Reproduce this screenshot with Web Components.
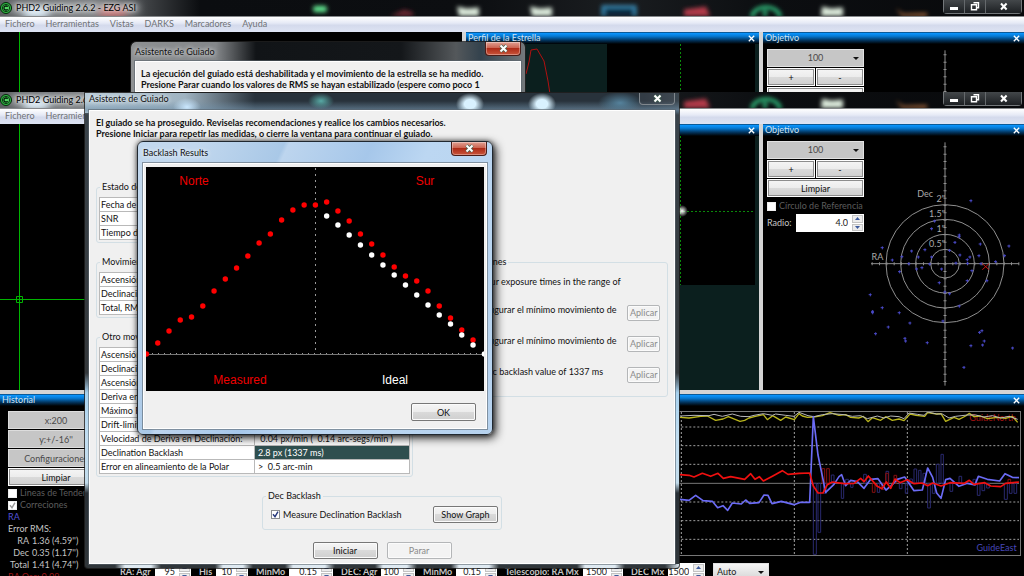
<!DOCTYPE html>
<html lang="es">
<head>
<meta charset="utf-8">
<title>PHD2 Guiding</title>
<style>
  html, body { height: 100%; margin: 0; }
  body {
    overflow: hidden;
    background: #000;
    font: 9px/12px Lato, "Open Sans", sans-serif;
    color: #111;
  }
</style>
</head>
<body>
<guide-desktop></guide-desktop>

<script>
const base = `
  * { box-sizing: border-box; }
  :host { display: block; box-sizing: border-box; }
  :host([hidden]) { display: none; }
  svg { display: block; }
  button, input, select { font: inherit; margin: 0; }
`;

const define = (name, html, setup) => {
  const template = document.createElement("template");
  template.innerHTML = html;
  customElements.define(name, class extends HTMLElement {
    constructor() {
      super();
      this.attachShadow({ mode: "open" }).append(template.content.cloneNode(true));
    }
    connectedCallback() {
      if (setup) setup(this.shadowRoot, this);
    }
  });
};

/* glass title bar with the desktop icons shining through */
define("glass-backdrop", `
  <style>${base}
    :host { background: linear-gradient(90deg, #5d6063 0, #74777a 90px, #45484b 140px, #0b0d10 200px, #0c0e11 46%, #1a1d20 60%, #0c0e11 75%, #08090b); overflow: hidden; }
    svg { width: 100%; height: 100%; }
  </style>
  <svg viewBox="0 0 1024 17" preserveAspectRatio="none" aria-hidden="true">
    <defs>
      <filter id="b" x="-30%" y="-60%" width="160%" height="220%"><feGaussianBlur stdDeviation="2"/></filter>
      <filter id="g" x="-30%" y="-60%" width="160%" height="220%"><feGaussianBlur stdDeviation="4"/></filter>
    </defs>
    <g filter="url(#g)">
      <rect x="12" y="3" width="126" height="11" fill="#b0b3b5"/>
      <rect x="24" y="9" width="24" height="10" fill="#e4f4ff"/>
      <rect x="100" y="9" width="26" height="9" fill="#d47a7c"/>
    </g>
    <g filter="url(#b)">
      <rect x="313" y="6" width="14" height="7" rx="3" fill="#5fe08c"/>
      <path d="M390 17l14-7 9 3v4z" fill="#6b2730"/>
      <path d="M457 7l10 2 12-1v9h-20zM530 7l10 2 12-1v9h-20z" fill="#dceadb"/>
      <path d="M603 17V7h32v10" fill="#102a40" stroke="#3b8db8" stroke-width="3"/>
      <path d="M684 10l22-3 4 10h-26z" fill="#b23a49"/>
      <path d="M752 18c2-14 26-14 28 0M765 17v-6" fill="none" stroke="#2fb578" stroke-width="4"/>
      <path d="M822 7l9 2 12-1v9h-22z" fill="#dceadb"/>
      <path d="M896 9l7 6 24-1v3h-25z" fill="#bd7440"/>
    </g>
  </svg>
`);

define("main-window", `
  <style>${base}
    :host { display: flex; flex-direction: column; overflow: hidden; isolation: isolate; background: #000; }
    header { display: grid; height: 17px; flex: none; border-bottom: 1px solid #85888b; }
    header > * { grid-area: 1 / 1; min-height: 0; }
    .front { display: flex; align-items: center; gap: 4px; color: #000; z-index: 1; }
    .front > svg { width: 12px; height: 12px; }
    h1 { margin: 0; font: inherit; flex: 1; text-shadow: 0 0 5px #fffa, 0 0 3px #fff8; }
    .caption { display: flex; align-self: flex-start; height: 14px; margin-right: 2px; border: 1px solid #73777a; border-top: 0; border-radius: 0 0 4px 4px; }
    .caption button { display: grid; place-items: center; width: 21px; padding: 0; border: 0; border-right: 1px solid #65696c; background: linear-gradient(#43474a, #1d2023); }
    .caption button:last-child { width: 35px; border-right: 0; }
    nav { display: flex; gap: 11px; flex: none; height: 15px; padding: 0 5px; line-height: 14px; background: linear-gradient(#fff, #e6eaf6 40%, #d4daec 55%, #dde3f3); }
    nav a { color: #6f7276; text-decoration: none; }
    main { flex: 1; min-height: 0; display: grid; gap: 4px; background: #d4d4d4; grid-template: 1fr 182px / 462fr 293fr 261fr; }
    :host([behind]) main { grid-template-rows: 266px; }
  </style>
  <header>
    <glass-backdrop></glass-backdrop>
    <div class="front">
      <svg viewBox="0 0 12 12" aria-hidden="true"><circle cx="6" cy="6" r="5.5" fill="#2fbb45" stroke="#04250a"/><circle cx="6" cy="6" r="3.6" fill="#54d865" stroke="#0b3511"/><path d="M7.6 4.9a2 2 0 1 0 0 2.2" fill="none" stroke="#03200a" stroke-width="1.3"/></svg>
      <h1>PHD2 Guiding 2.6.2 - EZG ASI</h1>
      <div class="caption">
        <button aria-label="Minimizar"><svg width="10" height="9"><path d="M1 5h8v3H1z" fill="#fff"/></svg></button>
        <button aria-label="Restaurar"><svg width="10" height="9"><path d="M3.5.8h5v5h-2M1.5 2.8h5v5h-5z" fill="none" stroke="#fff" stroke-width="1.4"/></svg></button>
        <button aria-label="Cerrar"><svg width="10" height="9"><path d="M2 1.5l5.6 6M7.6 1.5L2 7.5" stroke="#fff" stroke-width="2"/></svg></button>
      </div>
    </div>
  </header>
  <nav>
    <a href="#fichero">Fichero</a><a href="#herramientas">Herramientas</a><a href="#vistas">Vistas</a>
    <a href="#darks">DARKS</a><a href="#marcadores">Marcadores</a><a href="#ayuda">Ayuda</a>
  </nav>
  <main><slot></slot></main>
`, (root, host) => {
  // menus past the covering dialog are not drawn
  if (host.hasAttribute("short")) {
    root.querySelectorAll("nav a:nth-child(n+3)").forEach(el => el.remove());
    root.querySelector("h1").textContent = "PHD2 Guiding 2.6";
  }
});

define("dock-pane", `
  <style>${base}
    :host { display: flex; flex-direction: column; min-width: 0; min-height: 0; overflow: hidden; background: #000; }
    header { flex: none; display: flex; justify-content: space-between; align-items: center; height: 12px; padding: 0 4px 0 2px; color: #cfe3f5; background: linear-gradient(#0a3c66, #0a93fb 12%, #0679d2 35%, #02335c 70%, #000); }
    h2 { margin: 0; font: inherit; }
    button { padding: 0; border: 0; background: none; }
    .body { flex: 1; min-height: 0; display: flex; }
    ::slotted(*) { flex: 1; min-width: 0; }
  </style>
  <header><h2></h2><button aria-label="Cerrar panel"><svg width="7" height="7"><path d="M.8.8l5.4 5.4M6.2.8L.8 6.2" stroke="#fff" stroke-width="1.3"/></svg></button></header>
  <div class="body"><slot></slot></div>
`, (root, host) => {
  root.querySelector("h2").textContent = host.getAttribute("caption");
});

define("camera-view", `
  <style>${base}
    :host { background: #000; overflow: hidden; }
    svg { width: 100%; height: 100%; }
  </style>
  <svg viewBox="0 0 462 266" preserveAspectRatio="xMinYMin slice" aria-hidden="true" stroke="#00b400" fill="none">
    <path d="M19.5 0v266"/>
    <path d="M0 175.5h462M16.5 172.5h6v6h-6z"/>
  </svg>
`);

define("star-profile", `
  <style>${base}
    :host { background: #0b1f1e; overflow: hidden; }
    svg { width: 100%; height: 100%; }
  </style>
  <svg viewBox="0 0 293 254" preserveAspectRatio="xMaxYMin slice" aria-hidden="true" fill="none">
    <defs><radialGradient id="s"><stop stop-color="#fff"/><stop offset="1" stop-color="#fff0"/></radialGradient></defs>
    <path d="M141 0h148v149H141z" fill="#000"/>
    <path d="M214.500 0v149M141 75.500h148" stroke="#0a8a0a" stroke-dasharray="2 2"/>
    <circle cx="216" cy="75" r="6" fill="url(#s)"/>
    <path d="M60 30L63 18 65 6l6-1 7 12 4 20 4 26" stroke="#b01010"/>
  </svg>
`);

define("drop-list", `
  <style>${base}
    :host { display: grid; height: 18px; }
    select, svg { grid-area: 1 / 1; }
    select { appearance: none; width: 100%; height: 100%; padding: 0; border: 1px solid #e2e2e2; border-radius: 0; background: #c6c6c6; color: #4a4a4a; text-align: center; text-align-last: center; }
    :host([light]) select { padding-left: 3px; background: linear-gradient(#f6f6f6, #d4d4d4); color: #222; text-align-last: left; }
    svg { place-self: center end; margin-right: 5px; z-index: 1; pointer-events: none; }
  </style>
  <select><option></option></select>
  <svg width="6" height="3"><path d="M0 0h6L3 3z" fill="#111"/></svg>
`, (root, host) => {
  root.querySelector("option").textContent = host.getAttribute("value");
  root.querySelector("select").ariaLabel = host.getAttribute("label");
});

define("push-button", `
  <style>${base}
    :host { height: 18px; }
    button { display: block; width: 100%; height: 100%; padding: 0 2px; border: 1px solid #777; border-radius: 2px; background: linear-gradient(#f5f5f5, #ececec 48%, #dadada 50%, #cfcfcf); box-shadow: inset 0 0 0 1px #fbfbfb; color: #111; line-height: 1; white-space: nowrap; }
    button:disabled { border-color: #b4b6b8; background: #f3f3f3; color: #8b8b8b; }
    :host([dock]) button { border-color: #fff; outline: 1px solid #8d8d8d; outline-offset: -2px; border-radius: 0; }
    :host([flat]) button { border-color: #ddd; border-radius: 0; background: #c6c6c6; color: #4a4a4a; box-shadow: none; }
  </style>
  <button><slot></slot></button>
`, (root, host) => {
  root.querySelector("button").disabled = host.hasAttribute("disabled");
});

define("check-item", `
  <style>${base}
    label { display: flex; align-items: center; gap: 3px; white-space: nowrap; }
    input { appearance: none; flex: none; width: 9px; height: 9px; border: 1px solid #8a8d90; background: #fff; }
    span { display: grid; align-items: center; }
    span > * { grid-area: 1 / 1; }
    svg { display: none; z-index: 1; pointer-events: none; }
    input:checked + svg { display: block; }
    :host([dim]) { color: #5c5c5c; }
    :host([dim]) path { stroke: #999; }
    :host([dim]) input { border-color: #eee; }
  </style>
  <label><span><input type="checkbox"><svg width="9" height="9"><path d="M2 4.300l2 2.400 3-5" fill="none" stroke="#25387c" stroke-width="1.400"/></svg></span><slot></slot></label>
`, (root, host) => {
  const box = root.querySelector("input");
  box.checked = host.hasAttribute("checked");
  box.disabled = host.hasAttribute("dim");
});

define("spin-box", `
  <style>${base}
    :host { display: flex; align-items: center; gap: 4px; height: 18px; white-space: nowrap; }
    label { color: #c4c4c4; }
    .field { flex: 1; min-width: 0; display: flex; height: 100%; background: #fff; font-weight: normal; }
    input { appearance: textfield; flex: 1; min-width: 0; width: 0; padding: 0 3px 0 0; border: 0; background: none; color: #222; text-align: right; }
    input::-webkit-inner-spin-button { display: none; }
    .arrows { display: flex; flex-direction: column; gap: 1px; width: 13px; padding: 1px; }
    .arrows button { flex: 1; display: grid; place-items: center; padding: 0; border: 1px solid #c3c3c3; background: #ececec; }
  </style>
  <label for="n"></label>
  <div class="field">
    <input id="n" type="number" step="any">
    <div class="arrows">
      <button aria-label="Subir"><svg width="5" height="3"><path d="M0 3h5L2.500 0z" fill="#3d5a9c"/></svg></button>
      <button aria-label="Bajar"><svg width="5" height="3"><path d="M0 0h5L2.500 3z" fill="#3d5a9c"/></svg></button>
    </div>
  </div>
`, (root, host) => {
  root.querySelector("label").textContent = host.getAttribute("label");
  root.querySelector("input").value = host.getAttribute("value");
});

/* coordinates are in thirds of a pixel, origin at the centre of the target */
define("target-plot", `
  <style>${base}
    svg { width: 100%; height: 246px; overflow: visible; }
    text { font-size: 27px; fill: #aaa; text-anchor: end; }
  </style>
  <svg viewBox="-216 -368 432 738" preserveAspectRatio="xMidYMin meet" fill="none">
    <g stroke="#8f8f8f" stroke-width="3">
      <circle r="43"/><circle r="88"/><circle r="133"/><circle r="177"/>
      <path d="M0-364V366M-222 0H222"/>
      <path d="M0-352V360" stroke-width="9" stroke-dasharray="3 19"/>
      <path d="M-220 0H224" stroke-width="9" stroke-dasharray="3 19"/>
    </g>
    <g class="dots" stroke="#4a4ac8" stroke-width="3"></g>
    <path d="M112 0l20 18M132 0l-20 18" stroke="#c01010" stroke-width="3"/>
    <text x="-36" y="-200">Dec</text>
    <text x="0" y="-185">2"</text>
    <text x="0" y="-140">1.5"</text>
    <text x="0" y="-94">1"</text>
    <text x="0" y="-50">0.5"</text>
    <text x="-185" y="-10">RA</text>
  </svg>
`, root => {
  const dots = [[862,241],[753,302],[744,325],[827,344],[827,349],[814,366],[890,371],[976,377],[596,382],[684,392],[724,388],[798,390],[655,409],[704,410],[744,410],[829,404],[859,410],[851,418],[886,406],[963,406],[626,419],[676,430],[738,431],[817,428],[852,429],[892,430],[936,424],[715,442],[699,446],[774,446],[648,454],[865,451],[767,487],[851,481],[910,481],[784,515],[798,520],[560,523],[596,562],[827,557],[567,573],[567,577],[647,577],[778,602],[679,608],[614,620],[576,640],[664,654],[666,662],[731,667],[895,631],[888,636],[902,662],[897,674],[862,676],[987,683],[841,741]];
  root.querySelector(".dots").innerHTML =
    `<path d="${dots.map(([x, y]) => `M${x - 789} ${y - 430}h9m-4-4v9`).join("")}"/>`;
});

define("target-controls", `
  <style>${base}
    :host { display: flex; gap: 4px; padding: 5px 2px 0 4px; }
    .tools { flex: none; display: flex; flex-direction: column; gap: 1px; width: 97px; }
    .zoom { display: flex; gap: 1px; }
    .zoom > * { flex: 1; }
    check-item { margin: 2px 0 1px; }
    target-plot { flex: 1; min-width: 0; }
  </style>
  <div class="tools">
    <drop-list value="100" label="Escala"></drop-list>
    <div class="zoom"><push-button dock>+</push-button><push-button dock>-</push-button></div>
    <push-button dock><span class="more">Limpiar</span></push-button>
    <check-item dim class="more">Círculo de Referencia</check-item>
    <spin-box label="Radio:" value="4.0" class="more"></spin-box>
  </div>
  <target-plot class="plot"></target-plot>
`, (root, host) => {
  // only the tip of the axis shows when the window is covered
  if (host.hasAttribute("behind")) {
    root.querySelectorAll(".more").forEach(el => el.remove());
    root.querySelector(".plot").shadowRoot.querySelectorAll("text").forEach(el => el.remove());
  }
});

/* guiding curves, also in thirds of a pixel and pinned to the right edge */
define("history-graph", `
  <style>${base}
    :host { overflow: hidden; border: 1px solid #777; border-width: 1px 1px 1px 0; }
    svg { width: 100%; height: 100%; overflow: visible; }
    text { font-size: 27px; text-anchor: end; }
  </style>
  <svg viewBox="-12 66 1020 429" preserveAspectRatio="xMaxYMin meet" fill="none" stroke-linejoin="round">
    <path d="M-1700 111H1005M-1700 167H1005M-1700 223H1005M-1700 336H1005M-1700 392H1005M-1700 448H1005M331 66V495M670 66V495M-8 66V495" stroke="#a0a0a0" stroke-width="3" stroke-dasharray="6 6"/>
    <path d="M-1700 280H1005" stroke="#777" stroke-width="3"/>
    <path d="M388 280h9V493h-9zM402 280h8V427h-8zM419 280h8v30h-8zM442 255h8v25h-8zM472 280h7v45h-7zM485 268h8v12h-8zM500 280h7v12h-7zM539 253h8v27h-8zM580 280h7v27h-7zM606 244h8v36h-8zM646 280h8v16h-8zM664 280h7v30h-7zM677 267h8v13h-8zM690 237h8v43h-8zM704 241h7v39h-7zM717 250h8v30h-8zM731 280h8v74h-8zM745 280h8v30h-8zM757 223h8v57h-8zM771 193h7v87h-7zM798 280h8v24h-8zM825 259h8v21h-8zM867 268h8v12h-8zM880 280h8v36h-8zM894 280h8v22h-8zM908 280h8v14h-8zM961 280h9v48h-9zM976 280h8v30h-8zM990 280h8v30h-8z" stroke="#29296e" stroke-width="3"/>
    <path d="M414 236h8v44h-8zM428 236h8v44h-8zM565 280h8v27h-8zM593 280h8v18h-8zM605 250h8v30h-8zM630 256h8v24h-8zM972 268h8v12h-8z" stroke="#861010" stroke-width="3"/>
    <text x="996" y="93" fill="#a51212">GuideNorth</text>
    <path d="M-12 82L15 84 50 79 70 78 95 91 117 87 133 80 168 94 182 91 195 84 211 80 238 74 250 89 266 77 290 91 305 81 331 89 345 71 355 78 370 82 388 81 415 77 438 68 465 76 485 74 500 82 524 84 538 79 552 95 565 83 590 91 605 80 625 91 645 87 660 92 678 72 696 76 722 79 731 68 758 72 771 71 785 94 810 82 825 88 845 78 856 70 870 80 889 78 910 86 940 82 965 85 985 79 1001 97" stroke="#b9b51c" stroke-width="4"/>
    <path d="M-12 78L30 76 75 77 90 73 115 79 145 72 170 79 195 80 210 76 238 71 265 76 275 72 305 76 330 79 345 67 372 77 390 80 415 74 445 71 480 74 505 79 530 77 550 86 580 78 600 84 620 78 645 80 660 86 675 69 700 73 720 76 731 66 758 72 775 72 795 84 815 79 850 75 875 75 900 81 925 77 950 84 975 79 1001 88" stroke="#b9b9b9" stroke-width="3"/>
    <path d="M-12 328L15 331 35 316 57 332 85 334 101 353 117 347 131 361 145 339 172 342 185 330 197 340 225 338 240 315 252 316 264 341 292 334 330 344 350 337 377 337 388 80 402 195 425 307 450 283 465 260 473 254 485 287 500 271 520 275 540 295 560 268 582 266 606 300 622 287 640 268 662 261 690 302 715 300 731 234 746 262 758 309 771 325 785 269 798 265 825 289 850 280 873 285 883 259 910 268 947 273 963 251 985 262 1005 263" stroke="#6b6bf5" stroke-width="5"/>
    <path d="M-12 254L15 256 30 261 55 250 80 259 102 250 118 265 140 260 182 268 200 251 213 268 226 260 238 273 268 257 295 242 312 253 345 250 377 249 388 288 402 309 417 309 430 284 445 276 480 281 510 280 530 265 540 275 553 258 580 289 594 296 607 276 620 295 633 267 648 278 670 269 690 281 714 279 731 287 746 279 771 288 798 278 841 280 856 271 870 283 902 278 920 288 950 290 965 280 1005 276" stroke="#f01010" stroke-width="5"/>
    <text x="998" y="483" fill="#4747b8">GuideEast</text>
  </svg>
`);

define("history-panel", `
  <style>${base}
    :host { display: flex; align-items: flex-start; gap: 4px; padding: 5px 3px 0 8px; color: #c4c4c4; }
    .side { flex: none; width: 96px; }
    .side push-button { margin-bottom: 1px; }
    .side p { margin: 0; }
    .side dl { display: grid; grid-template-columns: 21px auto; justify-content: start; gap: 0 3px; margin: 0; }
    dt { justify-self: end; }
    dd { margin: 0; }
    .ra { color: #5151d6; }
    .osc { color: #9c1515; }
    .chart { flex: 1; min-width: 0; }
    history-graph { height: 145px; margin-bottom: 7px; }
    .tune { display: grid; gap: 8px; grid-template-columns: 71px 49px 77px 74px 74px 118px 74px 56px; padding-left: 12px; }
    .tune spin-box { font-weight: bold; }
  </style>
  <div class="side">
    <push-button flat>x:200</push-button>
    <push-button flat>y:+/-16''</push-button>
    <push-button flat>Configuraciones</push-button>
    <push-button dock>Limpiar</push-button>
    <check-item dim>Lineas de Tendencia</check-item>
    <check-item dim checked>Correciones</check-item>
    <p class="ra">RA</p>
    <p>Error RMS:</p>
    <dl><dt>RA</dt><dd>1.36 (4.59'')</dd><dt>Dec</dt><dd>0.35 (1.17'')</dd><dt>Total</dt><dd>1.41 (4.74'')</dd></dl>
    <p class="osc">RA Osc: 0.09</p>
  </div>
  <div class="chart">
    <history-graph></history-graph>
    <div class="tune">
      <spin-box label="RA: Agr" value="95"></spin-box>
      <spin-box label="His" value="10"></spin-box>
      <spin-box label="MinMo" value="0.15"></spin-box>
      <spin-box label="DEC: Agr" value="100"></spin-box>
      <spin-box label="MinMo" value="0.15"></spin-box>
      <spin-box label="Telescopio: RA Mx" value="1500"></spin-box>
      <spin-box label="DEC Mx" value="1500"></spin-box>
      <drop-list light value="Auto" label="Modo DEC"></drop-list>
    </div>
  </div>
`);

define("aero-dialog", `
  <style>${base}
    :host { display: flex; flex-direction: column; padding: 0 4px 4px; border: 1px solid #222c; border-radius: 6px 6px 4px 4px; isolation: isolate; background: var(--glass); background-clip: padding-box; }
    header { flex: none; display: flex; align-items: center; justify-content: space-between; height: var(--bar, 21px); }
    h2 { margin: 0; font: inherit; color: #111; text-shadow: 0 0 5px #fffc, 0 0 5px #fff9; }
    button { align-self: flex-start; display: grid; place-items: center; width: 36px; height: 14px; padding: 0; border: 1px solid #4a1d18; border-top: 0; border-radius: 0 0 4px 4px; background: linear-gradient(#e0a193, #cc6350 45%, #ae2c18 50%, #c9553b); box-shadow: inset 0 0 0 1px #fff5; }
    :host([inactive]) header { align-items: flex-start; }
    :host([inactive]) button { height: 12px; border-color: #80878d; background: #4a525a55; box-shadow: none; }
    .client { flex: 1; min-height: 0; border: 1px solid #fff; outline: 1px solid #5a646c99; background: #f0f0f0; }
  </style>
  <header><h2></h2><button aria-label="Cerrar"><svg width="11" height="9"><path d="M2.500 1.500l6 6M8.500 1.500l-6 6" stroke="#465" stroke-width="3.400"/><path d="M2.500 1.500l6 6M8.500 1.500l-6 6" stroke="#fff" stroke-width="2"/></svg></button></header>
  <div class="client"><slot></slot></div>
`, (root, host) => {
  root.querySelector("h2").textContent = host.getAttribute("caption");
});

define("group-box", `
  <style>${base}
    fieldset { min-width: 0; margin: 0; padding: 4px 2px 2px; border: 1px solid #d3dfe5; border-radius: 3px; }
    legend { margin-left: 1px; padding: 0 2px; }
  </style>
  <fieldset><legend></legend><slot></slot></fieldset>
`, (root, host) => {
  root.querySelector("legend").textContent = host.getAttribute("caption");
});

define("value-table", `
  <style>${base}
    table { width: 100%; table-layout: fixed; border-collapse: collapse; background: #fff; line-height: 11px; }
    th, td { height: 14px; padding: 0 1px; border: 1px solid #b9b9b9; font-weight: normal; text-align: left; white-space: pre; overflow: hidden; }
    td { padding-left: 3px; }
    tr.on td { background: #2f4f4f; color: #fff; }
  </style>
  <table><tbody></tbody></table>
`, (root, host) => {
  const body = root.querySelector("tbody");
  host.getAttribute("rows").split("|").forEach(row => {
    const [name, value = ""] = row.split("=");
    const tr = body.insertRow();
    const th = document.createElement("th");
    th.scope = "row";
    th.textContent = name;
    tr.append(th);
    tr.insertCell().textContent = value;
    tr.className = name === host.getAttribute("selected") ? "on" : "";
  });
});

define("guide-assistant", `
  <style>${base}
    :host { padding: 6px 6px 4px; }
    p { margin: 0; }
    .intro { margin-bottom: 42px; font-weight: bold; line-height: 11px; }
    .groups { display: grid; grid-template-columns: 317fr 239fr; gap: 13px 16px; }
    .tips { grid-area: 2 / 2 / 4 / 3; align-self: start; }
    .tip { display: flex; align-items: center; justify-content: space-between; height: 31px; padding: 0 5px 0 41px; white-space: nowrap; }
    .tips .tip:first-child { height: 25px; }
    .tips .tip:last-child { margin-bottom: 4px; }
    .tip p { margin-bottom: 5px; }
    .tip push-button { width: 33px; height: 16px; }
    .en p { padding-left: 8px; }
    .backlash { width: 240px; margin: 13px auto 12px; }
    .measure { display: flex; align-items: center; justify-content: space-between; padding: 0 1px 4px 6px; }
    .wide { width: 65px; }
    .actions { display: flex; justify-content: center; gap: 9px; }
    .actions .wide, .measure .wide { height: 17px; }
  </style>
  <p class="intro">El guiado se ha proseguido. Reviselas recomendaciones y realice los cambios necesarios.<br>Presione Iniciar para repetir las medidas, o cierre la ventana para continuar el guiado.</p>
  <div class="groups">
    <group-box caption="Estado de la medida">
      <value-table rows="Fecha de inicio|SNR|Tiempo de medida"></value-table>
    </group-box>
    <group-box caption="Movimiento de alta frecuencia" style="grid-row:2">
      <value-table rows="Ascensión Recta, RMS|Declinación, RMS|Total, RMS"></value-table>
    </group-box>
    <group-box caption="Otro movimiento de la estrella" style="grid-row:3">
      <value-table selected="Declination Backlash" rows="Ascensión Recta, Pico|Declinación, Pico|Ascensión Recta, Pico-Pico|Deriva en Ascensión Recta|Máximo Ratio de Deriva|Drift-limiting exposure|Velocidad de Deriva en Declinación:= 0.04 px/min (  0.14 arc-segs/min )|Declination Backlash=2.8 px (1337 ms)|Error en alineamiento de la Polar=&gt;  0.5 arc-min"></value-table>
    </group-box>
    <group-box caption="Recomendaciones" class="tips">
      <div class="tip en"><p>your exposure times in the range of</p></div>
      <div class="tip"><p>Configurar el mínimo movimiento de</p><push-button disabled>Aplicar</push-button></div>
      <div class="tip"><p>Configurar el mínimo movimiento de</p><push-button disabled>Aplicar</push-button></div>
      <div class="tip en"><p>Dec backlash value of 1337 ms</p><push-button disabled>Aplicar</push-button></div>
    </group-box>
  </div>
  <group-box caption="Dec Backlash" class="backlash">
    <div class="measure"><check-item checked>Measure Declination Backlash</check-item><push-button class="wide">Show Graph</push-button></div>
  </group-box>
  <div class="actions"><push-button class="wide">Iniciar</push-button><push-button class="wide" disabled>Parar</push-button></div>
`);

define("backlash-graph", `
  <style>${base}
    :host { background: #000; }
    svg { width: 100%; }
    text { font: 12px "Liberation Sans", Arial, sans-serif; fill: #f00000; text-anchor: middle; }
  </style>
  <svg viewBox="0 0 338 224">
    <path d="M169.500 1v186" stroke="#999" stroke-dasharray="2 4"/>
    <path d="M0 187.500h338" stroke="#777"/>
    <path d="M0 186.500h338" stroke="#999" stroke-dasharray="1 5"/>
    <g class="red" fill="#f00"></g>
    <g class="white" fill="#fff"></g>
    <text x="48" y="18">Norte</text>
    <text x="279" y="18">Sur</text>
    <text x="94" y="217">Measured</text>
    <text x="249" y="217" style="fill:#fff">Ideal</text>
  </svg>
`, root => {
  const step = 11.26;
  const plot = (group, from, values) => {
    root.querySelector(group).innerHTML = values
      .map((y, i) => `<circle cx="${0.5 + (from + i) * step}" cy="${y}" r="2.700"/>`).join("");
  };
  plot(".red", 0, [187, 176, 164, 153, 150, 139, 124, 112, 101, 89, 76, 67, 53, 43, 38, 38, 35, 44, 54, 67, 77, 88, 100, 109, 114, 124, 139, 151, 163, 173]);
  plot(".white", 16, [49, 58, 68, 78, 88, 98, 108, 118, 128, 138, 148, 157, 168, 178, 187]);
});

define("guide-desktop", `
  <style>${base}
    :host { position: relative; height: 100%; overflow: hidden; }
    .win { position: absolute; }
    .back { inset: 0 0 auto; height: 92px; }
    .main { inset: 92px 0 0; }
    .old { left: 130px; top: 41px; width: 396px; height: 51px; overflow: hidden; padding-bottom: 0; border-bottom: 0; border-radius: 6px 6px 0 0;
      --glass: linear-gradient(90deg, #8d9092, #84878a 85px, #111417 125px, #14171a 270px, #54585b 325px, #33424d 350px, #777b7e 396px); --bar: 19px; }
    .old p { margin: 6px 5px; font-weight: bold; line-height: 11px; white-space: nowrap; }
    .assistant { left: 84px; top: 92px; width: 596px; border-radius: 0 0 4px 4px;
      --bar: 17px; --glass:
        radial-gradient(14px 9px at 102px 14px, #cbe8ff, #cbe8ff00),
        radial-gradient(13px 8px at 236px 8px, #58a9a5, #58a9a500),
        radial-gradient(14px 11px at 385px 11px, #d9f2ff 40%, #d9f2ff00),
        radial-gradient(14px 11px at 457px 11px, #d9f2ff 40%, #d9f2ff00),
        radial-gradient(22px 11px at 535px 10px, #55829c, #55829c00),
        linear-gradient(90deg, #30363a 30px, #dfeaf2 40px 66px, #30363a 76px 130px, #dfeaf2 138px 158px, #30363a 168px 200px, #dfeaf2 208px 240px, #30363a 250px 290px, #dfeaf2 298px 322px, #30363a 332px 366px, #dfeaf2 374px 404px, #30363a 414px 492px, #dfeaf2 500px 530px, #30363a 540px 580px, #dfeaf2) 0 100% / 100% 4px no-repeat,
        linear-gradient(#26303a00 8px, #7190a8aa 17px, #fff0 22px) 0 0 / 100% 22px no-repeat,
        linear-gradient(90deg, #b7cbd8, #9fb3c1 100px, #28323b 170px, #28323b 560px, #3c4750) 0 0 / 100% 20px no-repeat,
        linear-gradient(#3a434a 30px, #34383b 280px, #a8d2ef 300px, #c2def1 345px, #c2dcec 390px, #293036 400px, #30363a 470px); }
    .results { left: 137px; top: 141px; width: 356px; padding: 0 5px 5px; border-color: #202830; border-radius: 6px; box-shadow: 3px 3px 10px #000c, 0 0 5px #0009;
      --glass: linear-gradient(115deg, #c2d8ee 12%, #a9c8e7 30%, #bdd5ee 31%, #a6c7ea 48%, #bcd7f2 60%, #b6d2ee); }
    .pad { padding: 3px 2px 7px; }
    .ok { width: 65px; margin: 12px 8px 0 auto; }
  </style>
  <main-window behind class="win back">
    <camera-view></camera-view>
    <dock-pane caption="Perfil de la Estrella"><star-profile></star-profile></dock-pane>
    <dock-pane caption="Objetivo"><target-controls behind></target-controls></dock-pane>
  </main-window>
  <aero-dialog caption="Asistente de Guiado" class="win old">
    <p>La ejecución del guiado está deshabilitada y el movimiento de la estrella se ha medido.<br>Presione Parar cuando los valores de RMS se hayan estabilizado (espere como poco 1</p>
  </aero-dialog>
  <main-window short class="win main">
    <camera-view></camera-view>
    <dock-pane caption=""><star-profile></star-profile></dock-pane>
    <dock-pane caption="Objetivo"><target-controls></target-controls></dock-pane>
    <dock-pane caption="Historial" style="grid-column:1/-1"><history-panel></history-panel></dock-pane>
  </main-window>
  <aero-dialog inactive caption="Asistente de Guiado" class="win assistant">
    <guide-assistant></guide-assistant>
  </aero-dialog>
  <aero-dialog caption="Backlash Results" class="win results">
    <div class="pad">
      <backlash-graph></backlash-graph>
      <push-button class="ok">OK</push-button>
    </div>
  </aero-dialog>
`);
</script>
</body>
</html>
